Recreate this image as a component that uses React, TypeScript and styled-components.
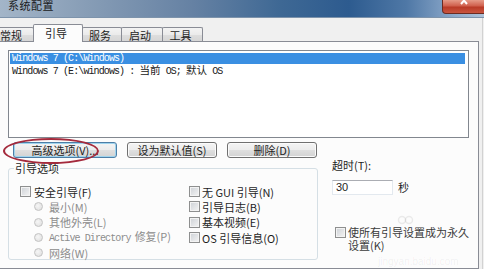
import React from 'react';
import styled, { createGlobalStyle } from 'styled-components';

const Global = createGlobalStyle`
  html, body { margin: 0; padding: 0; background: #f0f0f0; }
  body {
    width: 484px; height: 269px; overflow: hidden;
    font-family: "Noto Sans CJK SC", "Liberation Sans", sans-serif;
    font-size: 11px; color: #1e1e1e;
  }
`;

const Window = styled.div`
  position: relative;
  width: 484px; height: 269px;
  display: flex; flex-direction: column;
  overflow: hidden; background: #f0f0f0;
`;

const TitleBar = styled.div`
  height: 17px; flex: none;
  display: flex; align-items: flex-start;
  background: linear-gradient(to right, #a3b5c8 0%, #879db6 18%, #6581a3 40%, #3e6894 58%, #2d5b8f 72%, #4f78a6 84%, #8eaacb 94%, #aec3d9 100%);
  border-bottom: 1px solid #7d93ab;
`;

const Title = styled.span`
  margin: -2px 0 0 8px;
  font-size: 11px; line-height: 14px; letter-spacing: 0.5px;
  color: #1a1a1a;
`;

const CloseBtn = styled.div`
  margin-left: auto; margin-right: -4px;
  width: 44px; height: 13px;
  border: 1px solid #6b2b22; border-top: none;
  border-radius: 0 0 4px 4px;
  background: linear-gradient(#e59a88, #d0604d 45%, #b93a27 55%, #c9553f);
  display: flex; justify-content: center;
`;

const Content = styled.div`
  flex: 1; display: flex; flex-direction: column;
  border-right: 1px solid #d2d2d2; margin-right: 1px;
  min-height: 0;
`;

const TabStrip = styled.div`
  height: 23px; flex: none;
  display: flex; align-items: flex-end;
  margin-left: -8px;
`;

const Tab = styled.div<{ $w: number; $active?: boolean }>`
  position: relative;
  width: ${p => p.$w}px;
  height: ${p => (p.$active ? 18 : 14)}px;
  margin-right: -1px;
  margin-bottom: ${p => (p.$active ? -1 : 0)}px;
  z-index: ${p => (p.$active ? 2 : 1)};
  box-sizing: border-box;
  border: 1px solid #898c95; border-bottom: none;
  border-radius: 2px 2px 0 0;
  background: ${p => (p.$active ? '#fcfcfc' : 'linear-gradient(#f3f3f3, #ebebeb 50%, #dedede 51%, #d6d6d6)')};
  display: flex; align-items: center; justify-content: center;
  padding-right: 4px;
  font-size: 11px; line-height: 12px;
  padding-bottom: ${p => (p.$active ? 2 : 0)}px;
`;

const Panel = styled.div`
  flex: 1; min-height: 0;
  margin-left: -2px; margin-right: 3px;
  border: 1px solid #898c95;
  background: #fcfcfc;
  display: flex; flex-direction: column;
`;

const ListBox = styled.div`
  width: 461px; height: 88px; box-sizing: border-box;
  margin: 8px 0 0 9px;
  border: 1px solid #82878f;
  background: #ffffff;
  padding: 2px 3px 0 1px;
`;

const ListRow = styled.div<{ $selected?: boolean }>`
  height: 11px; line-height: 11px;
  padding-left: 2px;
  font-family: "Liberation Mono", "Noto Sans CJK SC", monospace;
  font-size: 10px; letter-spacing: -0.9px;
  white-space: pre;
  color: ${p => (p.$selected ? '#ffffff' : '#202020')};
  background: ${p => (p.$selected ? '#3a8fe2' : 'transparent')};
`;

const Cjk = styled.span`
  font-family: "Noto Sans CJK SC", sans-serif;
  font-size: 10.5px; letter-spacing: 0;
`;

const ButtonRow = styled.div`
  position: relative;
  display: flex; gap: 10px;
  margin: 4px 0 0 14px;
`;

const Button = styled.div<{ $w: number; $focus?: boolean }>`
  width: ${p => p.$w}px; height: 16px; box-sizing: border-box;
  border: 1px solid ${p => (p.$focus ? '#4d7ea6' : '#707070')};
  border-radius: 3px;
  background: linear-gradient(#f4f4f4, #ececec 50%, #dfdfdf 51%, #d3d3d3);
  box-shadow: ${p => (p.$focus ? 'inset 0 0 0 1px #9fd4ee' : 'inset 0 0 0 1px #fbfbfb')};
  display: flex; align-items: center; justify-content: center;
  font-size: 11px; line-height: 12px;
`;

const Annotation = styled.span`
  position: absolute;
  left: -10px; top: -4px;
  width: 92px; height: 22px;
  border: 2px solid #a42a3c;
  border-radius: 50%;
  pointer-events: none;
`;

const BottomArea = styled.div`
  display: flex;
  margin: 1px 0 0 9px;
`;

const GroupBox = styled.fieldset`
  width: 310px; height: 98px; box-sizing: border-box;
  margin: 3px 0 0 0; padding: 0;
  border: 1px solid #d5dfe5; border-radius: 3px;
  min-width: 0;
`;

const Legend = styled.legend`
  margin-left: 5px; padding: 0 1px;
  font-size: 11px; line-height: 12px;
`;

const OptionColumns = styled.div`
  display: flex;
  padding: 10px 0 0 11px;
`;

const Column = styled.div<{ $w?: number }>`
  display: flex; flex-direction: column;
  width: ${p => (p.$w ? `${p.$w}px` : 'auto')};
`;

const Option = styled.div<{ $indent?: number; $disabled?: boolean; $gap?: number }>`
  display: flex; align-items: center;
  height: 15.3px;
  padding-left: ${p => p.$indent ?? 0}px;
  gap: ${p => p.$gap ?? 3}px;
  font-size: 11px; line-height: 12px; white-space: nowrap;
  color: ${p => (p.$disabled ? '#8c8c8c' : '#1e1e1e')};
`;

const CheckBox = styled.span`
  flex: none;
  width: 11px; height: 11px; box-sizing: border-box;
  border: 1px solid #8e8f8f;
  background: linear-gradient(135deg, #cdd1d6, #f4f4f4);
  box-shadow: inset 0 0 0 1px #f3f3f3;
`;

const Radio = styled.span`
  flex: none;
  width: 9px; height: 9px; box-sizing: border-box;
  border: 1px solid #c3c3c3;
  border-radius: 50%;
  background: radial-gradient(circle at 40% 40%, #f6f6f6, #dcdcdc);
`;

const Mono = styled.span`
  font-family: "Liberation Mono", monospace;
  font-size: 10px; letter-spacing: -0.9px;
  margin-right: 4px;
`;

const SideColumn = styled.div`
  display: flex; flex-direction: column;
  margin-left: 14px;
`;

const FieldLabel = styled.div`
  font-size: 11px; line-height: 12px;
`;

const InputRow = styled.div`
  display: flex; align-items: center; gap: 5px;
  margin-top: 8px;
`;

const TextInput = styled.div`
  width: 61px; height: 15px; box-sizing: border-box;
  border: 1px solid #e3e9ef; border-top-color: #abadb3;
  background: #ffffff;
  padding-left: 3px;
  font-family: "Liberation Sans", sans-serif;
  font-size: 11px; line-height: 13px;
`;

const PermanentOption = styled.div`
  display: flex; align-items: flex-start; gap: 2px;
  margin: 31px 0 0 3px;
  width: 135px;
  font-size: 11px; line-height: 12.5px;
  color: #3a3a3a;
  ${CheckBox} { margin-top: 1px; }
`;

const Watermark = styled.div`
  position: absolute;
  left: 378px; top: 256px;
  font-family: "Liberation Sans", sans-serif;
  font-size: 10px; line-height: 11px; color: rgba(0, 0, 0, 0.06);
`;

const WatermarkLogo = styled.svg`
  position: absolute;
  left: 397px; top: 214px;
`;

const tabs = [
  { label: '常规', w: 42 },
  { label: '引导', w: 50, active: true },
  { label: '服务', w: 40 },
  { label: '启动', w: 42 },
  { label: '工具', w: 41 },
];

export default function App() {
  return (
    <Window>
      <Global />
      <TitleBar>
        <Title>系统配置</Title>
        <CloseBtn>
          <svg width="12" height="8" viewBox="0 0 12 8">
            <path d="M2 -3 L8 4 M8 -3 L2 4" stroke="#ffffff" strokeWidth="2" fill="none" />
          </svg>
        </CloseBtn>
      </TitleBar>
      <Content>
        <TabStrip>
          {tabs.map(t => (
            <Tab key={t.label} $w={t.w} $active={t.active}>{t.label}</Tab>
          ))}
        </TabStrip>
        <Panel>
          <ListBox>
            <ListRow $selected>Windows 7 (C:\Windows)</ListRow>
            <ListRow>
              Windows 7 (E:\windows) : <Cjk>当前</Cjk> OS; <Cjk>默认</Cjk> OS
            </ListRow>
          </ListBox>
          <ButtonRow>
            <Button $w={104} $focus>高级选项(V)...</Button>
            <Button $w={90}>设为默认值(S)</Button>
            <Button $w={90}>删除(D)</Button>
            <Annotation />
          </ButtonRow>
          <BottomArea>
            <GroupBox>
              <Legend>引导选项</Legend>
              <OptionColumns>
                <Column $w={169}>
                  <Option><CheckBox />安全引导(F)</Option>
                  <Option $indent={14} $gap={6} $disabled><Radio />最小(M)</Option>
                  <Option $indent={14} $gap={6} $disabled><Radio />其他外壳(L)</Option>
                  <Option $indent={14} $gap={6} $disabled><Radio /><span><Mono>Active Directory</Mono>修复(P)</span></Option>
                  <Option $indent={14} $gap={6} $disabled><Radio />网络(W)</Option>
                </Column>
                <Column>
                  <Option $gap={2}><CheckBox />无 GUI 引导(N)</Option>
                  <Option $gap={2}><CheckBox />引导日志(B)</Option>
                  <Option $gap={2}><CheckBox />基本视频(E)</Option>
                  <Option $gap={2}><CheckBox />OS 引导信息(O)</Option>
                </Column>
              </OptionColumns>
            </GroupBox>
            <SideColumn>
              <FieldLabel>超时(T):</FieldLabel>
              <InputRow>
                <TextInput>30</TextInput>
                <span>秒</span>
              </InputRow>
              <PermanentOption>
                <CheckBox />
                <span>使所有引导设置成为永久设置(K)</span>
              </PermanentOption>
            </SideColumn>
          </BottomArea>
        </Panel>
      </Content>
      <WatermarkLogo width="18" height="12" viewBox="0 0 18 12">
        <circle cx="5" cy="6" r="3.5" stroke="rgba(0,0,0,0.07)" fill="none" strokeWidth="1.5" />
        <circle cx="12" cy="6" r="3.5" stroke="rgba(0,0,0,0.07)" fill="none" strokeWidth="1.5" />
      </WatermarkLogo>
      <Watermark>jingyan.baidu.com</Watermark>
    </Window>
  );
}
